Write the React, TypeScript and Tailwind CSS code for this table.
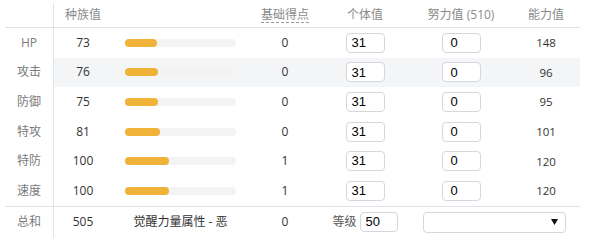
import React from "react";

const stats = [
  { label: "HP", base: 73, pts: 0, iv: 31, ev: 0, value: 148 },
  { label: "攻击", base: 76, pts: 0, iv: 31, ev: 0, value: 96 },
  { label: "防御", base: 75, pts: 0, iv: 31, ev: 0, value: 95 },
  { label: "特攻", base: 81, pts: 0, iv: 31, ev: 0, value: 101 },
  { label: "特防", base: 100, pts: 1, iv: 31, ev: 0, value: 120 },
  { label: "速度", base: 100, pts: 1, iv: 31, ev: 0, value: 120 },
];

const font = { fontFamily: '"Open Sans", "Noto Sans CJK SC", sans-serif' };

function Box({ v, w = "w-[39px]", pl = "pl-[5px]" }: { v: string | number; w?: string; pl?: string }) {
  return (
    <div
      className={`${w} ${pl} h-[20px] border border-[#d4d7dd] rounded-[4px] bg-white flex items-center text-[13px] text-black`}
      style={{ fontFamily: '"Liberation Sans", Arial, sans-serif' }}
    >
      {v}
    </div>
  );
}

export default function App() {
  return (
    <div className="w-[600px] h-[240px] bg-white overflow-hidden pt-[3px] pl-[5px]" style={font}>
      <div className="w-[575px] text-[12px]">
        {/* header */}
        <div className="flex h-[25px] border-b border-[#dfe3ea] text-[#8a8a8a]">
          <div className="w-[49px] border-r border-[#dfe3ea]" />
          <div className="w-[58px] flex items-center justify-center pb-[1px]">种族值</div>
          <div className="w-[137px]" />
          <div className="w-[72px] flex items-center justify-center pb-[1px]">
            <span className="border-b border-dashed border-[#999] leading-[15px]">基础得点</span>
          </div>
          <div className="w-[88px] flex items-center justify-center pb-[1px]">个体值</div>
          <div className="w-[104px] flex items-center justify-center pb-[1px]">努力值 (510)</div>
          <div className="w-[66px] flex items-center justify-center pb-[1px]">能力值</div>
        </div>
        {/* rows */}
        {stats.map((s, i) => (
          <div
            key={s.label}
            className={`flex h-[29.6px] items-center ${i === stats.length - 1 ? "border-b border-[#dfe3ea] box-content" : ""}`}
          >
            <div className="w-[49px] h-full border-r border-[#dfe3ea] flex items-center justify-center text-[#7a7a7a] bg-white">
              {s.label}
            </div>
            <div className={`flex flex-1 h-full items-center ${i === 1 ? "bg-[#f4f5f7]" : ""}`}>
              <div className="w-[58px] text-center text-[#333]">{s.base}</div>
              <div className="w-[137px] pl-[13px]">
                <div className="w-[111px] h-[8px] rounded-full bg-[#f3f3f3]">
                  <div
                    className="h-full rounded-full bg-[#f0b33a]"
                    style={{ width: `${(s.base / 255) * 111}px` }}
                  />
                </div>
              </div>
              <div className="w-[72px] text-center text-[#333]">{s.pts}</div>
              <div className="w-[88px] flex justify-center">
                <Box v={s.iv} />
              </div>
              <div className="w-[104px] flex justify-center">
                <Box v={s.ev} pl="pl-[8px]" />
              </div>
              <div className="w-[66px] text-center text-[#333] text-[11.5px]">{s.value}</div>
            </div>
          </div>
        ))}
        {/* total */}
        <div className="flex h-[31px] items-center">
          <div className="w-[49px] h-full border-r border-[#dfe3ea] flex items-center justify-center text-[#7a7a7a]">
            总和
          </div>
          <div className="w-[58px] text-center text-[#333]">505</div>
          <div className="w-[137px] text-center text-[#333]">觉醒力量属性 - 恶</div>
          <div className="w-[72px] text-center text-[#333]">0</div>
          <div className="w-[88px] flex justify-center items-center gap-[3px]">
            <span className="text-[#555]">等级</span>
            <Box v={50} w="w-[38px]" />
          </div>
          <div className="w-[170px] flex justify-center">
            <div className="w-[143px] h-[21px] border border-[#d4d7dd] rounded-[4px] bg-white flex items-center justify-end pr-[7px]">
              <svg width="7" height="6" viewBox="0 0 7 6">
                <path d="M0 0 L7 0 L3.5 6 Z" fill="#111" />
              </svg>
            </div>
          </div>
        </div>
      </div>
    </div>
  );
}
